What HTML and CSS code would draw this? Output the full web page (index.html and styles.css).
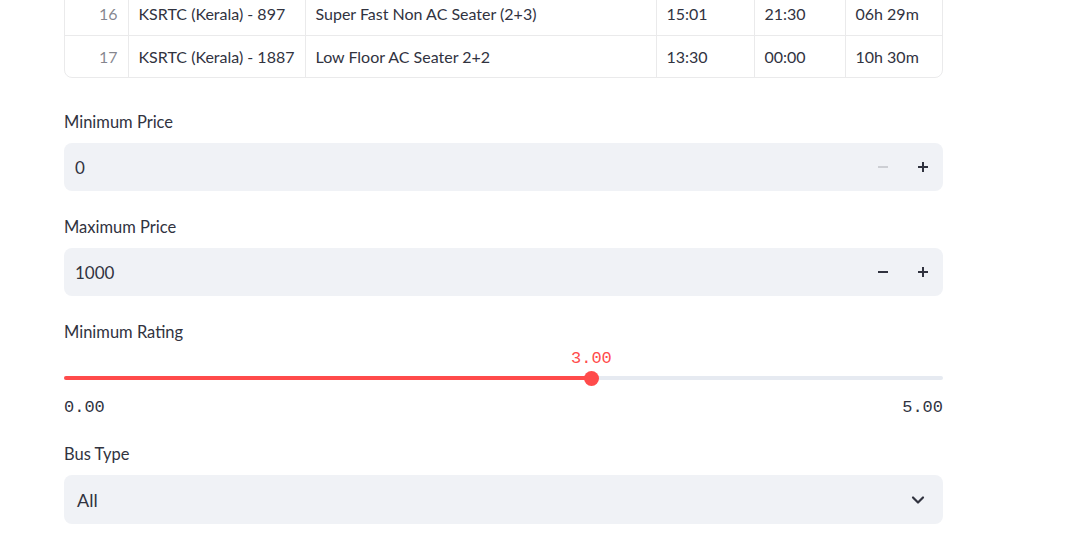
FILE: index.html
```html
<!DOCTYPE html>
<html>
<head>
<meta charset="utf-8">
<link rel="stylesheet" href="styles.css">
</head>
<body>
<div class="main">
  <div class="table-wrap">
    <table class="data">
      <colgroup>
        <col class="c-idx"><col class="c-name"><col class="c-type"><col class="c-dep"><col class="c-arr"><col class="c-dur">
      </colgroup>
      <tbody>
        <tr><td class="idx">16</td><td>KSRTC (Kerala) - 897</td><td>Super Fast Non AC Seater (2+3)</td><td>15:01</td><td>21:30</td><td>06h 29m</td></tr>
        <tr><td class="idx">17</td><td>KSRTC (Kerala) - 1887</td><td>Low Floor AC Seater 2+2</td><td>13:30</td><td>00:00</td><td>10h 30m</td></tr>
      </tbody>
    </table>
  </div>

  <div class="field">
    <div class="label">Minimum Price</div>
    <div class="num-input">
      <span class="value">0</span>
      <div class="steps">
        <span class="step disabled"><svg width="12" height="12" viewBox="0 0 12 12"><path d="M1 6h10" stroke="currentColor" stroke-width="2"/></svg></span>
        <span class="step"><svg width="12" height="12" viewBox="0 0 12 12"><path d="M1 6h10M6 1v10" stroke="currentColor" stroke-width="2"/></svg></span>
      </div>
    </div>
  </div>

  <div class="field">
    <div class="label">Maximum Price</div>
    <div class="num-input">
      <span class="value">1000</span>
      <div class="steps">
        <span class="step"><svg width="12" height="12" viewBox="0 0 12 12"><path d="M1 6h10" stroke="currentColor" stroke-width="2"/></svg></span>
        <span class="step"><svg width="12" height="12" viewBox="0 0 12 12"><path d="M1 6h10M6 1v10" stroke="currentColor" stroke-width="2"/></svg></span>
      </div>
    </div>
  </div>

  <div class="field slider-field">
    <div class="label">Minimum Rating</div>
    <div class="slider">
      <div class="track">
        <div class="fill" style="width:60%"></div>
        <div class="thumb" style="left:60%"><span class="thumb-val">3.00</span></div>
      </div>
    </div>
    <div class="ticks"><span>0.00</span><span>5.00</span></div>
  </div>

  <div class="field">
    <div class="label">Bus Type</div>
    <div class="select">
      <span class="sel-value">All</span>
      <svg class="chev" width="14" height="14" viewBox="0 0 14 14"><path d="M2 4.5l5 5 5-5" fill="none" stroke="currentColor" stroke-width="2.2" stroke-linecap="round" stroke-linejoin="round"/></svg>
    </div>
  </div>
</div>
</body>
</html>
```

FILE: styles.css
```css
html, body {
  margin: 0;
  padding: 0;
  background: #ffffff;
}
body {
  font-family: "Source Sans Pro", Lato, "Liberation Sans", sans-serif;
  color: rgb(49, 51, 63);
  overflow: hidden;
}
.main {
  width: 879px;
  margin-left: 64px;
}
.table-wrap {
  margin-top: -8px;
  border: 1px solid rgba(49, 51, 63, 0.1);
  border-radius: 8px;
  overflow: hidden;
}
.data {
  width: 100%;
  border-collapse: collapse;
  table-layout: fixed;
  font-size: 16px;
}
.c-idx { width: 63px; }
.c-name { width: 177px; }
.c-type { width: 351px; }
.c-dep { width: 98px; }
.c-arr { width: 91px; }
.c-dur { width: auto; }
.data td {
  height: 42px;
  padding: 0 10px;
  box-sizing: border-box;
  border-left: 1px solid rgba(49, 51, 63, 0.1);
  border-top: 1px solid rgba(49, 51, 63, 0.1);
  white-space: nowrap;
  vertical-align: middle;
}
.data tr:first-child td { border-top: none; }
.data td:first-child { border-left: none; }
.data td.idx {
  text-align: right;
  color: rgba(49, 51, 63, 0.6);
}
.field {
  margin-top: 34px;
}
.field + .field {
  margin-top: 26px;
}
.label {
  font-size: 16.5px;
  line-height: 21px;
  height: 21px;
  margin-bottom: 10px;
}
.num-input {
  height: 48px;
  background: rgb(240, 242, 246);
  border-radius: 8px;
  display: flex;
  align-items: center;
  justify-content: space-between;
  padding: 0 14px 0 11px;
}
.value {
  font-size: 17px;
}
.steps {
  display: flex;
  align-items: center;
  gap: 28px;
}
.step {
  display: flex;
  color: rgb(49, 51, 63);
}
.step.disabled {
  color: rgba(49, 51, 63, 0.18);
}
.slider-field .label {
  margin-bottom: 0;
}
.slider {
  height: 47px;
  display: flex;
  align-items: flex-end;
}
.track {
  position: relative;
  width: 100%;
  height: 4px;
  border-radius: 2px;
  background: rgb(230, 234, 241);
  margin-bottom: 10px;
}
.fill {
  height: 100%;
  border-radius: 2px;
  background: rgb(255, 75, 75);
}
.thumb {
  position: absolute;
  top: 50%;
  width: 15px;
  height: 15px;
  margin-left: -7.5px;
  margin-top: -7.5px;
  border-radius: 50%;
  background: rgb(255, 75, 75);
}
.thumb-val {
  position: absolute;
  bottom: 17px;
  left: 50%;
  transform: translateX(-50%);
  font-family: "Liberation Mono", "DejaVu Sans Mono", monospace;
  font-size: 17px;
  line-height: 20px;
  color: rgb(255, 75, 75);
}
.ticks {
  display: flex;
  justify-content: space-between;
  font-family: "Liberation Mono", "DejaVu Sans Mono", monospace;
  font-size: 17px;
  line-height: 20px;
  margin-top: 8px;
}
.select {
  height: 49px;
  background: rgb(240, 242, 246);
  border-radius: 8px;
  display: flex;
  align-items: center;
  justify-content: space-between;
  padding: 0 18px 0 13px;
}
.sel-value {
  font-size: 18px;
}
.chev {
  color: rgb(49, 51, 63);
}
```
